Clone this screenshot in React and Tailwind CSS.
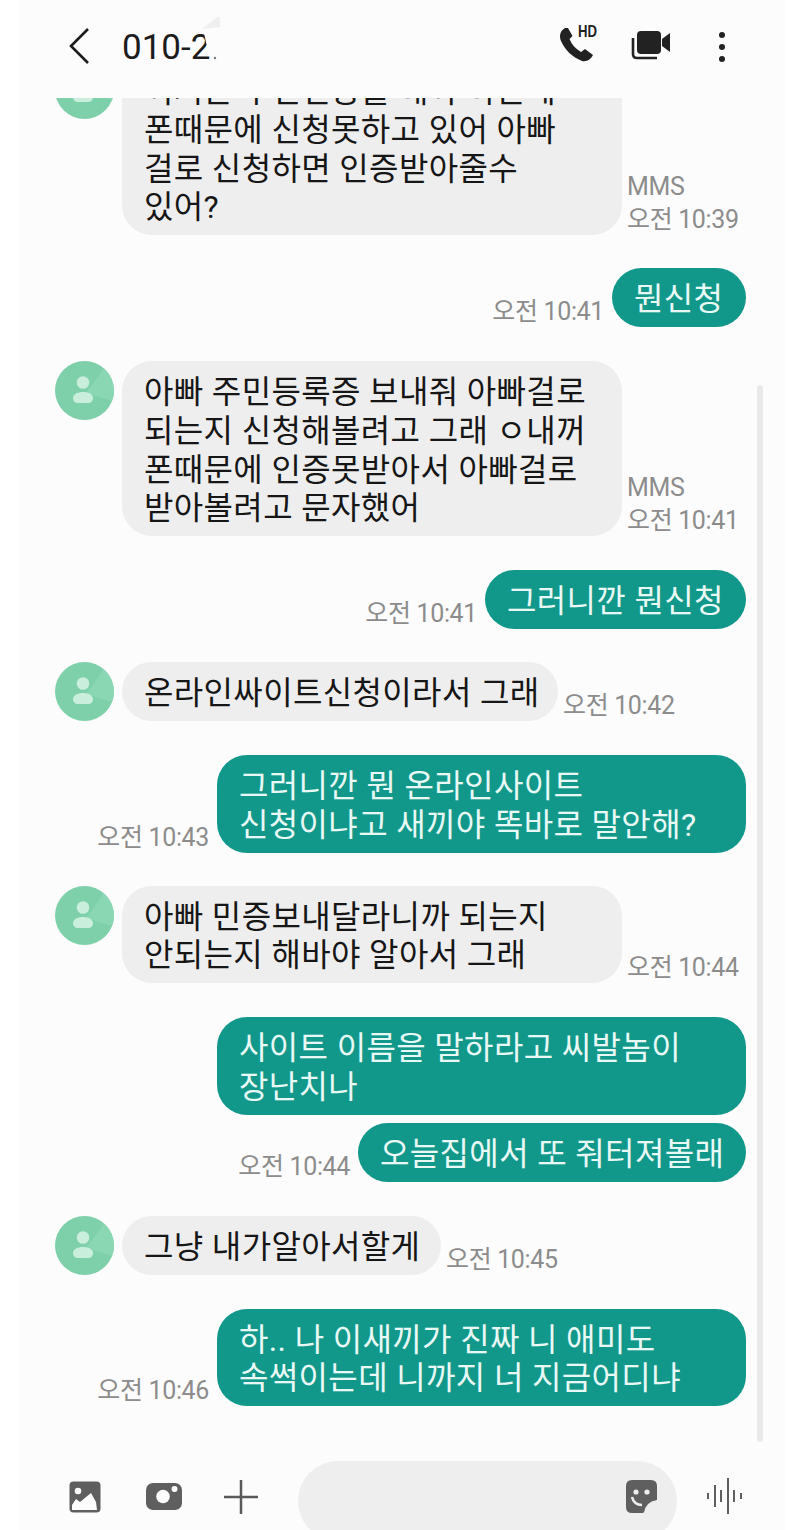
import React from 'react';

const Avatar = () => (
    <svg width="59" height="59" viewBox="0 0 59 59" className="shrink-0">
        <circle cx="29.5" cy="29.5" r="29.5" fill="#7dd0a9" />
        <path d="M31 32 L49 7.5 A29.5 29.5 0 0 1 57 40 Z" fill="#8ad7b3" />
        <circle cx="28" cy="21.5" r="6.3" fill="#c9efdc" />
        <path d="M18 37 C18 33 23 31 28 31 C33 31 38 33 38 37 C38 40 36 42 33 42 L23 42 C20 42 18 40 18 37 Z" fill="#c9efdc" />
    </svg>
);

const Time = ({ mms, children }) => (
    <div className="shrink-0 whitespace-nowrap text-[25px] leading-[33px] tracking-[-0.35px] text-[#8c8c8c] -mb-[1px]">
        {mms && <div>MMS</div>}
        <div>{children}</div>
    </div>
);

const Received = ({ width, mt, time, mms, lines }) => (
    <div className={`flex items-end gap-[5px] pl-[37px] ${mt}`}>
        <div className="self-start"><Avatar /></div>
        <div className={`ml-[3px] rounded-[30px] bg-[#eeeeee] px-[22px] pt-[12px] pb-[8px] text-[32px] leading-[38.8px] tracking-[0.35px] text-[#161616] whitespace-nowrap ${width}`}>
            {lines.map((l, i) => <div key={i}>{l}</div>)}
        </div>
        {time && <Time mms={mms}>{time}</Time>}
    </div>
);

const Sent = ({ width, mt, time, lines }) => (
    <div className={`flex items-end justify-end gap-[8px] pr-[39px] ${mt}`}>
        {time && <Time>{time}</Time>}
        <div className={`rounded-[30px] bg-[#12988a] px-[22px] pt-[12px] pb-[8px] text-[32px] leading-[38.8px] tracking-[0.35px] text-[#e8f8f5] whitespace-nowrap ${width}`}>
            {lines.map((l, i) => <div key={i}>{l}</div>)}
        </div>
    </div>
);

const App = () => {
    return (
        <div className="h-[1530px] w-[800px] overflow-hidden bg-white pl-[18px] pr-[15px] font-['Roboto','Noto_Sans_CJK_KR',sans-serif]">
            <div className="flex h-full flex-col bg-[#fcfcfc]">
                <header className="flex h-[98px] shrink-0 items-start">
                    <svg width="24" height="38" viewBox="0 0 24 38" className="ml-[50px] mt-[27px] shrink-0">
                        <path d="M20 2 L3 19 L20 36" fill="none" stroke="#1c1c1c" strokeWidth="2.6" />
                    </svg>
                    <div className="relative ml-[30px] mt-[25px] w-[100px] whitespace-nowrap text-[35px] leading-[46px] text-[#1c1c1c]">
                        010-2
                        {/* blurred-out part of the number */}
                        <svg width="30" height="48" viewBox="0 0 30 48" className="absolute left-[76px] -top-[8px]">
                            <path d="M4 12 L22 -2 L22 10 Z" fill="#efefef" />
                            <path d="M6 16 L20 16 L20 30 L9 30 Z" fill="#fcfcfc" />
                            <circle cx="17" cy="41" r="1.2" fill="#777777" />
                        </svg>
                    </div>
                    <svg width="40" height="42" viewBox="0 -4 40 42" className="ml-[336px] mt-[21px] shrink-0">
                        <path d="M7 3 C2 6 1 11 3 16 C7 25 14 32 24 36 C29 37 33 34 35 30 L27 24 L23 27 C18 24 14 20 11.5 14 L14.5 11 L10 3 Z" fill="#222222" />
                        <text x="20" y="12" fontSize="16" fontWeight="900" fontFamily="'Liberation Sans', sans-serif" fill="#222222" textLength="19" lengthAdjust="spacingAndGlyphs">HD</text>
                    </svg>
                    <svg width="42" height="32" viewBox="0 0 42 32" className="ml-[33px] mt-[30px] shrink-0">
                        <rect x="6" y="1" width="24" height="23" rx="4" fill="#222222" />
                        <path d="M31 9 L39 3 L39 22 L31 16 Z" fill="#222222" />
                        <path d="M2 8 L2 24 Q2 28 6 28 L26 28" fill="none" stroke="#222222" strokeWidth="2.6" />
                    </svg>
                    <div className="ml-[46px] mt-[32px] flex w-[6px] flex-col gap-[6px]">
                        <div className="h-[6px] w-[6px] rounded-full bg-[#222222]" />
                        <div className="h-[6px] w-[6px] rounded-full bg-[#222222]" />
                        <div className="h-[6px] w-[6px] rounded-full bg-[#222222]" />
                    </div>
                </header>

                <main className="relative min-h-0 flex-1 overflow-hidden">
                    <div className="absolute right-[22px] top-[287px] h-[1057px] w-[6px] rounded-full bg-[#e9e9e9]" />
                    <Received width="w-[500px]" mt="-mt-[38px]" mms time="오전 10:39" lines={['이거는 주민인증을 해야 하는데', '폰때문에 신청못하고 있어 아빠', '걸로 신청하면 인증받아줄수', '있어?']} />
                    <Sent width="w-[134px]" mt="mt-[33px]" time="오전 10:41" lines={['뭔신청']} />
                    <Received width="w-[500px]" mt="mt-[34px]" mms time="오전 10:41" lines={['아빠 주민등록증 보내줘 아빠걸로', '되는지 신청해볼려고 그래 ㅇ내꺼', '폰때문에 인증못받아서 아빠걸로', '받아볼려고 문자했어']} />
                    <Sent width="w-[261px]" mt="mt-[34px]" time="오전 10:41" lines={['그러니깐 뭔신청']} />
                    <Received width="w-[436px]" mt="mt-[33px]" time="오전 10:42" lines={['온라인싸이트신청이라서 그래']} />
                    <Sent width="w-[529px]" mt="mt-[34px]" time="오전 10:43" lines={['그러니깐 뭔 온라인사이트', '신청이냐고 새끼야 똑바로 말안해?']} />
                    <Received width="w-[500px]" mt="mt-[33px]" time="오전 10:44" lines={['아빠 민증보내달라니까 되는지', '안되는지 해바야 알아서 그래']} />
                    <Sent width="w-[529px]" mt="mt-[34px]" lines={['사이트 이름을 말하라고 씨발놈이', '장난치나']} />
                    <Sent width="w-[388px]" mt="mt-[8px]" time="오전 10:44" lines={['오늘집에서 또 줘터져볼래']} />
                    <Received width="w-[319px]" mt="mt-[34px]" time="오전 10:45" lines={['그냥 내가알아서할게']} />
                    <Sent width="w-[529px]" mt="mt-[34px]" time="오전 10:46" lines={['하.. 나 이새끼가 진짜 니 애미도', '속썩이는데 니까지 너 지금어디냐']} />
                </main>

                <footer className="flex h-[69px] shrink-0 items-start overflow-hidden">
                    <svg width="32" height="32" viewBox="0 0 32 32" className="ml-[51px] mt-[20px] shrink-0">
                        <rect x="0.5" y="0.5" width="31" height="31" rx="4" fill="#5f5f5f" />
                        <circle cx="9" cy="10" r="3.3" fill="#fcfcfc" />
                        <path d="M3 29 L3 24 L7 18 L11 21 L22 12 L27 21 L28 29 Z" fill="#fcfcfc" />
                    </svg>
                    <svg width="36" height="27" viewBox="0 0 36 27" className="ml-[45px] mt-[22px] shrink-0">
                        <rect width="36" height="27" rx="7" fill="#5f5f5f" />
                        <circle cx="17" cy="13.5" r="6.8" fill="#fcfcfc" />
                        <circle cx="28.5" cy="6" r="3" fill="#fcfcfc" />
                    </svg>
                    <svg width="34" height="34" viewBox="0 0 34 34" className="ml-[42px] mt-[19px] shrink-0">
                        <path d="M17 0 L17 34 M0 17 L34 17" stroke="#5a5a5a" strokeWidth="2.5" />
                    </svg>
                    <div className="ml-[40px] flex h-[80px] w-[379px] shrink-0 justify-end rounded-[40px] bg-[#eeeeee] pr-[20px] pt-[19px]">
                        <svg width="31" height="33" viewBox="0 0 31 33">
                            <path d="M6 0 L25 0 Q31 0 31 6 L31 20 L17 33 L6 33 Q0 33 0 27 L0 6 Q0 0 6 0 Z" fill="#5f5f5f" />
                            <circle cx="10" cy="12" r="2.6" fill="#eeeeee" />
                            <circle cx="21" cy="12" r="2.6" fill="#eeeeee" />
                            <path d="M6 17 Q8 25 16 25" fill="none" stroke="#eeeeee" strokeWidth="2.6" />
                            <path d="M18 33 Q19 22 31 20 L31 22 L20 33 Z" fill="#eeeeee" />
                        </svg>
                    </div>
                    <svg width="36" height="36" viewBox="0 0 36 36" className="ml-[30px] mt-[17px] shrink-0">
                        <path d="M1 15 L1 21 M8 7 L8 29 M14 12 L14 24 M21 0 L21 36 M27 12 L27 24 M34 15 L34 21" stroke="#5f5f5f" strokeWidth="2" />
                    </svg>
                </footer>
            </div>
        </div>
    );
};

export default App;
